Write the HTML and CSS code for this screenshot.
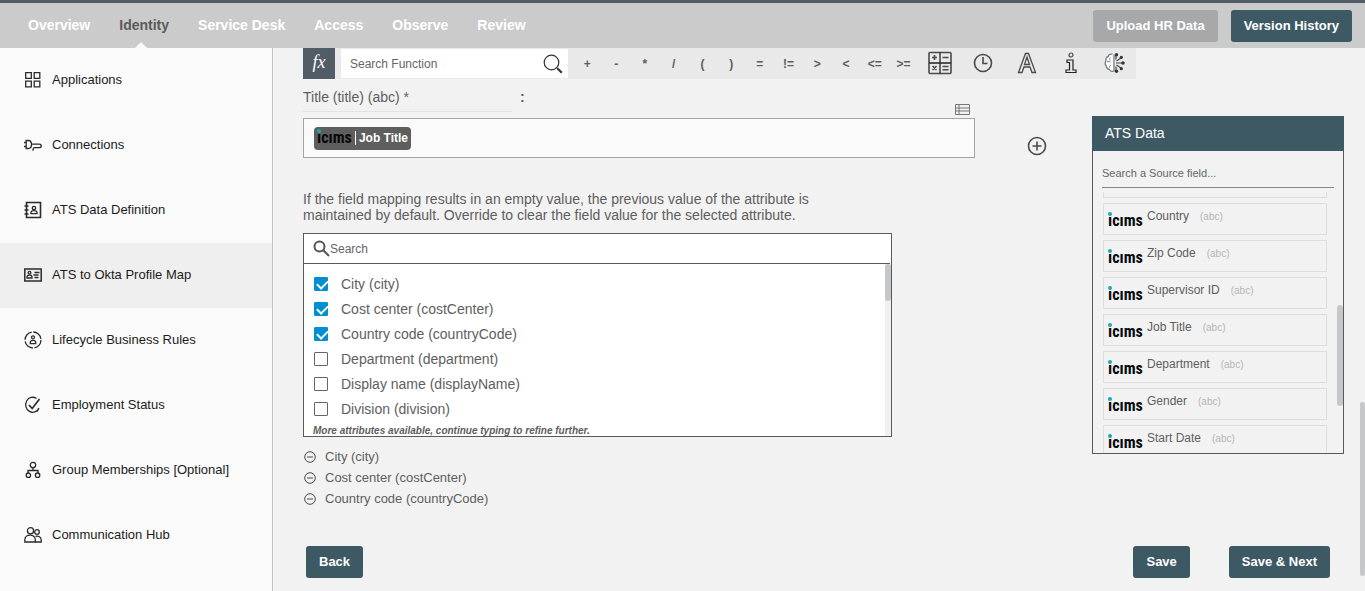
FILE: index.html
```html
<!DOCTYPE html>
<html lang="en">
<head>
<meta charset="utf-8">
<title>ATS to Okta Profile Map</title>
<link rel="stylesheet" href="styles.css">
</head>
<body>
<div class="app">
  <header class="topbar">
    <nav class="tabs" aria-label="Main">
      <a class="tab" href="#">Overview</a>
      <a class="tab tab-active" href="#">Identity</a>
      <a class="tab" href="#">Service Desk</a>
      <a class="tab" href="#">Access</a>
      <a class="tab" href="#">Observe</a>
      <a class="tab" href="#">Review</a>
    </nav>
    <div class="top-actions">
      <button class="btn btn-muted" type="button">Upload HR Data</button>
      <button class="btn" type="button">Version History</button>
    </div>
  </header>

  <div class="body">
    <nav class="sidebar" aria-label="Identity">
      <a class="side-link" href="#">
        <svg class="side-icon" viewBox="0 0 18 18"><path d="M1.700 1.700h5.600v5.600h-5.600zM10.200 1.700h5.600v5.600h-5.600zM1.700 10.200h5.600v5.600h-5.600zM10.200 10.200h5.600v5.600h-5.600z"/></svg>
        Applications</a>
      <a class="side-link" href="#">
        <svg class="side-icon" viewBox="0 0 18 18"><path d="M2.200 4.500h2c3 0 3.300 2 3.300 4s-.5 4-3.300 4h-2zM0 6.500h2M0 10.500h2M7.500 8.200h7.500c3 0 3 3.500 0 3.500h-4.500c-1.200 0-1.500.8-1.500 3"/></svg>
        Connections</a>
      <a class="side-link" href="#">
        <svg class="side-icon" viewBox="0 0 18 18"><path d="M2.500 1.500h14v15h-14zM0.500 5h4M0.500 9h4M0.500 13h4" stroke-width="1.600"/><circle cx="10" cy="7" r="1.700"/><path d="M7 12.700v-1.200c0-2.600 6-2.600 6 0v1.200z"/></svg>
        ATS Data Definition</a>
      <a class="side-link side-active" href="#" aria-current="page">
        <svg class="side-icon" viewBox="0 0 18 18"><path d="M.8 3h16.400v12h-16.400z" stroke-width="1.500"/><circle cx="5.500" cy="6.700" r="1.400"/><path d="M3 12v-1c0-2.400 5-2.400 5 0v1zM10.500 6.500h5M9.500 9h5M10.500 11.500h4"/></svg>
        ATS to Okta Profile Map</a>
      <a class="side-link" href="#">
        <svg class="side-icon" viewBox="0 0 18 18"><circle cx="9" cy="9" r="8" stroke-dasharray="11 1.570"/><circle cx="9" cy="6.300" r="1.500"/><path d="M6.300 12.700v-1.200c0-2.800 5.400-2.800 5.400 0v1.200z"/></svg>
        Lifecycle Business Rules</a>
      <a class="side-link" href="#">
        <svg class="side-icon" viewBox="0 0 18 18"><path d="M12.500 2.500a7 7.500 0 1 0 2.500 9.500M14.500 13.500a7 7 0 0 1-2 2.200"/><path d="M5 9l3.200 3.500 7.300-9.500" stroke-width="1.700"/></svg>
        Employment Status</a>
      <a class="side-link" href="#">
        <svg class="side-icon" viewBox="0 0 18 18"><circle cx="9" cy="4" r="2.700"/><circle cx="4.400" cy="14.200" r="2.200"/><circle cx="13.600" cy="14.200" r="2.200"/><path d="M9 6.700v2.300M4 12v-2.500h10v2.500"/></svg>
        Group Memberships [Optional]</a>
      <a class="side-link" href="#">
        <svg class="side-icon" viewBox="0 0 18 18"><circle cx="6.500" cy="4.800" r="3.100"/><path d="M.8 16v-2c0-6.500 10.500-6.500 10.500 0v2z"/><circle cx="13" cy="6" r="2.300"/><path d="M11.500 10.300c3-.8 5.700.8 5.700 3.700v2h-6"/></svg>
        Communication Hub</a>
    </nav>

    <main class="content">
      <div class="toolbar">
        <span class="fx">fx</span>
        <label class="fn-search">
          <input class="fn-input" type="text" placeholder="Search Function" aria-label="Search Function">
          <svg class="fn-icon" viewBox="0 0 20 20"><circle cx="8.500" cy="8.500" r="7.300"/><path d="M13.800 13.800l1.500 1.500"/><path d="M14.800 14.800l4 4" stroke-width="2.200"/></svg>
        </label>
        <div class="ops">
          <button class="op" type="button">+</button>
          <button class="op" type="button">-</button>
          <button class="op" type="button">*</button>
          <button class="op" type="button">/</button>
          <button class="op" type="button">(</button>
          <button class="op" type="button">)</button>
          <button class="op" type="button">=</button>
          <button class="op" type="button">!=</button>
          <button class="op" type="button">&gt;</button>
          <button class="op" type="button">&lt;</button>
          <button class="op" type="button">&lt;=</button>
          <button class="op" type="button">&gt;=</button>
        </div>
        <div class="tools">
          <button class="tool" type="button" aria-label="Math">
            <svg class="tool-icon" viewBox="0 0 24 24"><rect x="1" y="1.500" width="22" height="21" rx="1"/><path d="M12 1.500v21M1 12h22" stroke="#222" stroke-width="1.300"/><path d="M4 6.500h5M6.500 4v5M14.500 6.500h6M4.500 15l4 4M8.500 15l-4 4M14.500 15.500h6M14.500 18.800h6"/></svg>
          </button>
          <button class="tool" type="button" aria-label="Date">
            <svg class="tool-icon" viewBox="0 0 24 24"><circle cx="12" cy="12" r="8.500"/><path d="M12 6v6.500h4.500"/></svg>
          </button>
          <button class="tool" type="button" aria-label="Text">
            <svg class="tool-icon" viewBox="0 0 24 24"><path d="M3.500 21.500l7-19h3l7 19h-3.500l-2-5.500h-6l-2 5.500zM9.500 13.500h5l-2.500-7.500z" stroke-width="1.300"/></svg>
          </button>
          <button class="tool" type="button" aria-label="Information">
            <svg class="tool-icon" viewBox="0 0 24 24"><circle cx="12" cy="4" r="2" stroke-width="1.200"/><path d="M8 9h6v10h3v2.500h-10v-2.500h3.500v-7.500h-2.500z" stroke="#222" stroke-width="1.200"/></svg>
          </button>
          <button class="tool" type="button" aria-label="Smart rules">
            <svg class="tool-icon" viewBox="0 0 24 24"><path d="M12 3.500v17M10.500 3.200c-3-.5-4 .8-4.200 2.300-2.300.6-2.800 2.500-2.200 4.200-1.500 1.800-1.200 4.300.3 5.300 0 2.300 1.500 3.300 3 3.500 1 2 2.600 2.200 4 1.700" fill="#fff" stroke="#777f88" stroke-width="1.300"/><path d="M5 11c1.500-1 2.500-.5 3.500.3M8.500 6.500c-1 .6-1.200 2-.3 3M7.500 17c-.5-1 .2-2.300 1.500-2.500" stroke="#777f88" stroke-width="1"/><path d="M14 8.500v-5M14 15.500v5M14 12h7M14.500 10l4.500-3M14.500 14l4.500 3" stroke-width="1.200"/><g fill="#333" stroke="none"><circle cx="14.500" cy="3.700" r="1.700"/><circle cx="19.300" cy="6.300" r="1.600"/><circle cx="21" cy="12" r="1.700"/><circle cx="19.300" cy="17.700" r="1.600"/><circle cx="14.500" cy="20.300" r="1.700"/></g></svg>
          </button>
        </div>
      </div>

      <div class="workspace">
        <section class="mapping">
          <div class="field-head">
            <div class="field-name">Title (title) (abc) *</div>
            <span class="colon">:</span>
            <svg class="table-icon" viewBox="0 0 15 11"><path d="M.5.500h14v10h-14zM.5 4h14M.5 7h14M4 .500v10"/></svg>
          </div>
          <div class="field">
            <span class="chip"><span class="logo">ıcıms</span><span class="chip-text">Job Title</span></span>
          </div>

          <p class="hint">If the field mapping results in an empty value, the previous value of the attribute is maintained by default. Override to clear the field value for the selected attribute.</p>

          <div class="picker">
            <label class="picker-search">
              <svg class="picker-icon" viewBox="0 0 17 17"><circle cx="6.500" cy="6.500" r="5"/><path d="M10.300 10.300l5.700 5.700"/></svg>
              <input class="picker-input" type="text" placeholder="Search" aria-label="Search">
            </label>
            <div class="options">
              <label class="option"><input class="check" type="checkbox" checked>City (city)</label>
              <label class="option"><input class="check" type="checkbox" checked>Cost center (costCenter)</label>
              <label class="option"><input class="check" type="checkbox" checked>Country code (countryCode)</label>
              <label class="option"><input class="check" type="checkbox">Department (department)</label>
              <label class="option"><input class="check" type="checkbox">Display name (displayName)</label>
              <label class="option"><input class="check" type="checkbox">Division (division)</label>
              <span class="picker-track"><span class="picker-thumb"></span></span>
            </div>
            <div class="more">More attributes available, continue typing to refine further.</div>
          </div>

          <ul class="chosen">
            <li class="chosen-item"><button class="remove" type="button" aria-label="Remove City"><svg class="remove-icon" viewBox="0 0 12 12"><circle cx="6" cy="6" r="5.300"/><path d="M3 6h6"/></svg></button>City (city)</li>
            <li class="chosen-item"><button class="remove" type="button" aria-label="Remove Cost center"><svg class="remove-icon" viewBox="0 0 12 12"><circle cx="6" cy="6" r="5.300"/><path d="M3 6h6"/></svg></button>Cost center (costCenter)</li>
            <li class="chosen-item"><button class="remove" type="button" aria-label="Remove Country code"><svg class="remove-icon" viewBox="0 0 12 12"><circle cx="6" cy="6" r="5.300"/><path d="M3 6h6"/></svg></button>Country code (countryCode)</li>
          </ul>
        </section>

        <button class="add" type="button" aria-label="Add">
          <svg class="add-icon" viewBox="0 0 20 20"><circle cx="10" cy="10" r="8.500"/><path d="M10 5.500v9M5.500 10h9"/></svg>
        </button>

        <aside class="source">
          <h2 class="source-title">ATS Data</h2>
          <div class="source-body">
            <input class="source-search" type="text" placeholder="Search a Source field..." aria-label="Search a Source field">
            <div class="source-list">
              <div class="source-item source-peek"></div>
              <div class="source-item"><span class="logo">ıcıms</span><span>Country</span><span class="type">(abc)</span></div>
              <div class="source-item"><span class="logo">ıcıms</span><span>Zip Code</span><span class="type">(abc)</span></div>
              <div class="source-item"><span class="logo">ıcıms</span><span>Supervisor ID</span><span class="type">(abc)</span></div>
              <div class="source-item"><span class="logo">ıcıms</span><span>Job Title</span><span class="type">(abc)</span></div>
              <div class="source-item"><span class="logo">ıcıms</span><span>Department</span><span class="type">(abc)</span></div>
              <div class="source-item"><span class="logo">ıcıms</span><span>Gender</span><span class="type">(abc)</span></div>
              <div class="source-item"><span class="logo">ıcıms</span><span>Start Date</span><span class="type">(abc)</span></div>
            </div>
            <span class="source-thumb"></span>
          </div>
        </aside>
      </div>

      <footer class="footer">
        <button class="btn" type="button">Back</button>
        <div class="footer-right">
          <button class="btn" type="button">Save</button>
          <button class="btn" type="button">Save &amp; Next</button>
        </div>
      </footer>
      <span class="page-thumb"></span>
    </main>
  </div>
</div>
</body>
</html>
```
FILE: styles.css
```css
* { box-sizing: border-box; }

body {
  margin: 0;
  background: #f2f2f2;
  color: #5e5e5e;
  font: 14px/16px "Liberation Sans", Arial, sans-serif;
}

button, input { font: inherit; color: inherit; }
button { cursor: pointer; }
svg { display: block; fill: none; stroke: #4a4a4a; flex: none; }

.app {
  min-height: 100vh;
  display: flex;
  flex-direction: column;
}

/* Top bar */
.topbar {
  display: flex;
  justify-content: space-between;
  height: 48px;
  padding: 0 13px 0 28px;
  border-top: 3px solid #505d67;
  background: #cbcbcb;
}
.tabs { display: flex; gap: 29px; }
.tab {
  position: relative;
  display: flex;
  align-items: center;
  padding-bottom: 2px;
  color: #fff;
  font-weight: bold;
  text-decoration: none;
}
.tab-active { color: #5a5a5a; }
.tab-active::after {
  content: "";
  position: absolute;
  left: 50%;
  bottom: 0;
  margin-left: -9px;
  border: 6px solid transparent;
  border-top: 0;
  border-bottom-color: #fafafa;
}
.top-actions { display: flex; align-items: center; gap: 13px; }

.btn {
  height: 32px;
  padding: 0 13px;
  border: 0;
  border-radius: 3px;
  background: #3d5a64;
  color: #fff;
  font-size: 13px;
  font-weight: bold;
}
.btn-muted { background: #a7a8aa; }

/* Side menu */
.body { flex: 1; display: flex; }
.sidebar {
  flex: 0 0 273px;
  border-right: 1px solid #c4c4c4;
  background: #fafafa;
}
.side-link {
  display: flex;
  align-items: center;
  gap: 10px;
  height: 65px;
  padding: 0 0 2px 24px;
  color: #1c1c1c;
  font-size: 13px;
  text-decoration: none;
}
.side-active { background: #efefef; }
.side-icon { width: 18px; height: 18px; stroke: #2b2b2b; stroke-width: 1.3; }

/* Function toolbar */
.content {
  position: relative;
  flex: 1;
  min-width: 0;
  padding: 0 21px 13px 30px;
}
.toolbar {
  display: flex;
  align-items: center;
  height: 31px;
  margin-right: 208px;
  background: #e9e9e9;
}
.fx {
  flex: none;
  width: 32px;
  height: 31px;
  background: #505d67;
  color: #fff;
  font: italic 18px/29px "Liberation Serif", serif;
  text-align: center;
}
.fn-search {
  flex: 1;
  display: flex;
  align-items: center;
  height: 29px;
  margin: 0 5px 0 6px;
  padding: 0 5px 0 9px;
  background: #fff;
}
.fn-input {
  flex: 1;
  min-width: 0;
  padding: 0;
  border: 0;
  outline: 0;
  background: none;
  font-size: 12px;
}
input::placeholder { color: #666; opacity: 1; }
.fn-icon { width: 20px; height: 20px; stroke: #333; stroke-width: 1.2; }
.ops { flex: 0 0 345px; display: flex; }
.op {
  flex: 1 1 0;
  min-width: 0;
  padding: 0;
  border: 0;
  background: none;
  font-size: 12px;
  font-weight: bold;
}
.tools { flex: 0 0 218px; display: flex; }
.tool {
  flex: 1;
  display: flex;
  justify-content: center;
  padding: 0 0 2px;
  border: 0;
  background: none;
}
.tool-icon { width: 24px; height: 24px; stroke-width: 1.6; }

/* Mapping column */
.workspace { display: flex; align-items: flex-start; }
.mapping { flex: 1; min-width: 0; }
.field-head { display: flex; height: 39px; }
.field-name {
  flex: 0 1 209px;
  height: 33px;
  padding-top: 10px;
  border-bottom: 1px solid #e2e2e2;
  font-size: 14px;
}
.colon { flex: 1; padding: 10px 0 0 8px; font-weight: bold; }
.table-icon {
  align-self: flex-end;
  width: 15px;
  height: 11px;
  margin: 0 5px 3px 0;
  stroke: #777;
}
.field {
  display: flex;
  align-items: center;
  height: 40px;
  padding: 0 10px;
  border: 1px solid #a5a5a5;
  background: #fafafa;
}
.chip {
  display: flex;
  align-items: center;
  height: 23px;
  padding: 0 3px;
  border-radius: 4px;
  background: #5e5e5e;
}
.chip-text {
  margin-left: 3px;
  padding-left: 3px;
  border-left: 1px solid #fff;
  color: #fff;
  font-size: 12px;
  font-weight: bold;
  line-height: 14px;
}
.logo {
  position: relative;
  color: #080808;
  font: bold 16px/20px "Liberation Sans Narrow", "Roboto Condensed", "Open Sans Condensed", "Liberation Sans", sans-serif;
}
.logo::before {
  content: "";
  position: absolute;
  left: 0;
  top: 1px;
  width: 4px;
  height: 4px;
  border-radius: 50%;
  background: #19a9b4;
}
.hint { max-width: 540px; margin: 33px 0 10px; }

/* Attribute picker */
.picker {
  position: relative;
  height: 204px;
  margin-right: 83px;
  border: 1px solid #5a5a5a;
  background: #fff;
}
.picker-search {
  display: flex;
  align-items: center;
  height: 30px;
  margin-right: 1px;
  padding-left: 9px;
  border-bottom: 1px solid #5a5a5a;
}
.picker-icon { width: 17px; height: 17px; stroke: #555; stroke-width: 2; }
.picker-input {
  flex: 1;
  padding: 0;
  border: 0;
  outline: 0;
  background: none;
  font-size: 12px;
}
.options { position: relative; height: 172px; padding: 7px 0 0 10px; }
.option { display: flex; align-items: center; gap: 13px; height: 25px; }
.check {
  appearance: none;
  position: relative;
  width: 14px;
  height: 14px;
  margin: 0;
  border: 1px solid #666;
  border-radius: 1px;
  background: #fff;
}
.check:checked { border-color: #008fd3; background: #008fd3; }
.check:checked::after {
  content: "";
  position: absolute;
  left: 2px;
  top: 2px;
  width: 9px;
  height: 5px;
  border: solid #fff;
  border-width: 0 0 2px 2px;
  transform: rotate(-45deg);
}
.picker-track {
  position: absolute;
  top: 0;
  right: 0;
  bottom: 0;
  width: 6px;
  background: #f0f0f0;
}
.picker-thumb {
  display: block;
  height: 37px;
  border-radius: 3px;
  background: #c6c7c9;
}
.more {
  position: absolute;
  left: 9px;
  bottom: 0;
  font-size: 10px;
  font-style: italic;
  font-weight: bold;
  line-height: 11px;
}
.chosen {
  min-height: 100px;
  margin: 9px 0 0;
  padding: 0;
  list-style: none;
}
.chosen-item { display: flex; align-items: center; height: 21px; font-size: 13px; }
.remove { margin: 0 9px 0 1px; padding: 0; border: 0; background: none; }
.remove-icon { width: 12px; height: 12px; }

.add { margin: 57px 45px 0 52px; padding: 0; border: 0; background: none; }
.add-icon { width: 20px; height: 20px; stroke-width: 1.6; }

/* Source panel */
.source { flex: 0 0 252px; margin-top: 37px; }
.source-title {
  margin: 0;
  padding: 0 13px;
  background: #3d5a64;
  color: #fff;
  font-size: 14px;
  font-weight: normal;
  line-height: 35px;
}
.source-body {
  position: relative;
  height: 303px;
  padding: 8px 9px 0;
  border: 1px solid #5a5a5a;
  border-top: 0;
}
.source-search {
  width: 100%;
  height: 29px;
  padding: 0;
  border: 0;
  border-bottom: 1px solid #888;
  outline: 0;
  background: none;
  font-size: 11px;
}
.source-list {
  display: flex;
  flex-direction: column;
  gap: 5px;
  height: 261px;
  margin-top: 4px;
  padding: 0 7px 0 1px;
  overflow: hidden;
}
.source-item {
  flex: none;
  display: flex;
  height: 32px;
  padding: 4px;
  border: 1px solid #dedede;
  font-size: 12px;
}
.source-item .logo { width: 39px; padding-top: 3px; }
.source-item .logo::before { top: 4px; }
.source-peek { height: 6px; padding: 0; border-top: 0; }
.type { margin: 2px 0 0 11px; color: #b5b5b5; font-size: 10px; line-height: 14px; }
.source-thumb {
  position: absolute;
  right: 0;
  top: 154px;
  width: 6px;
  height: 101px;
  border-radius: 3px;
  background: #c6c7c9;
}

/* Footer */
.footer { display: flex; justify-content: space-between; padding: 0 14px 0 3px; }
.footer-right { display: flex; gap: 39px; }
.page-thumb {
  position: absolute;
  right: 0;
  top: 354px;
  width: 5px;
  height: 174px;
  border-radius: 3px;
  background: #c6c7c9;
}
```
